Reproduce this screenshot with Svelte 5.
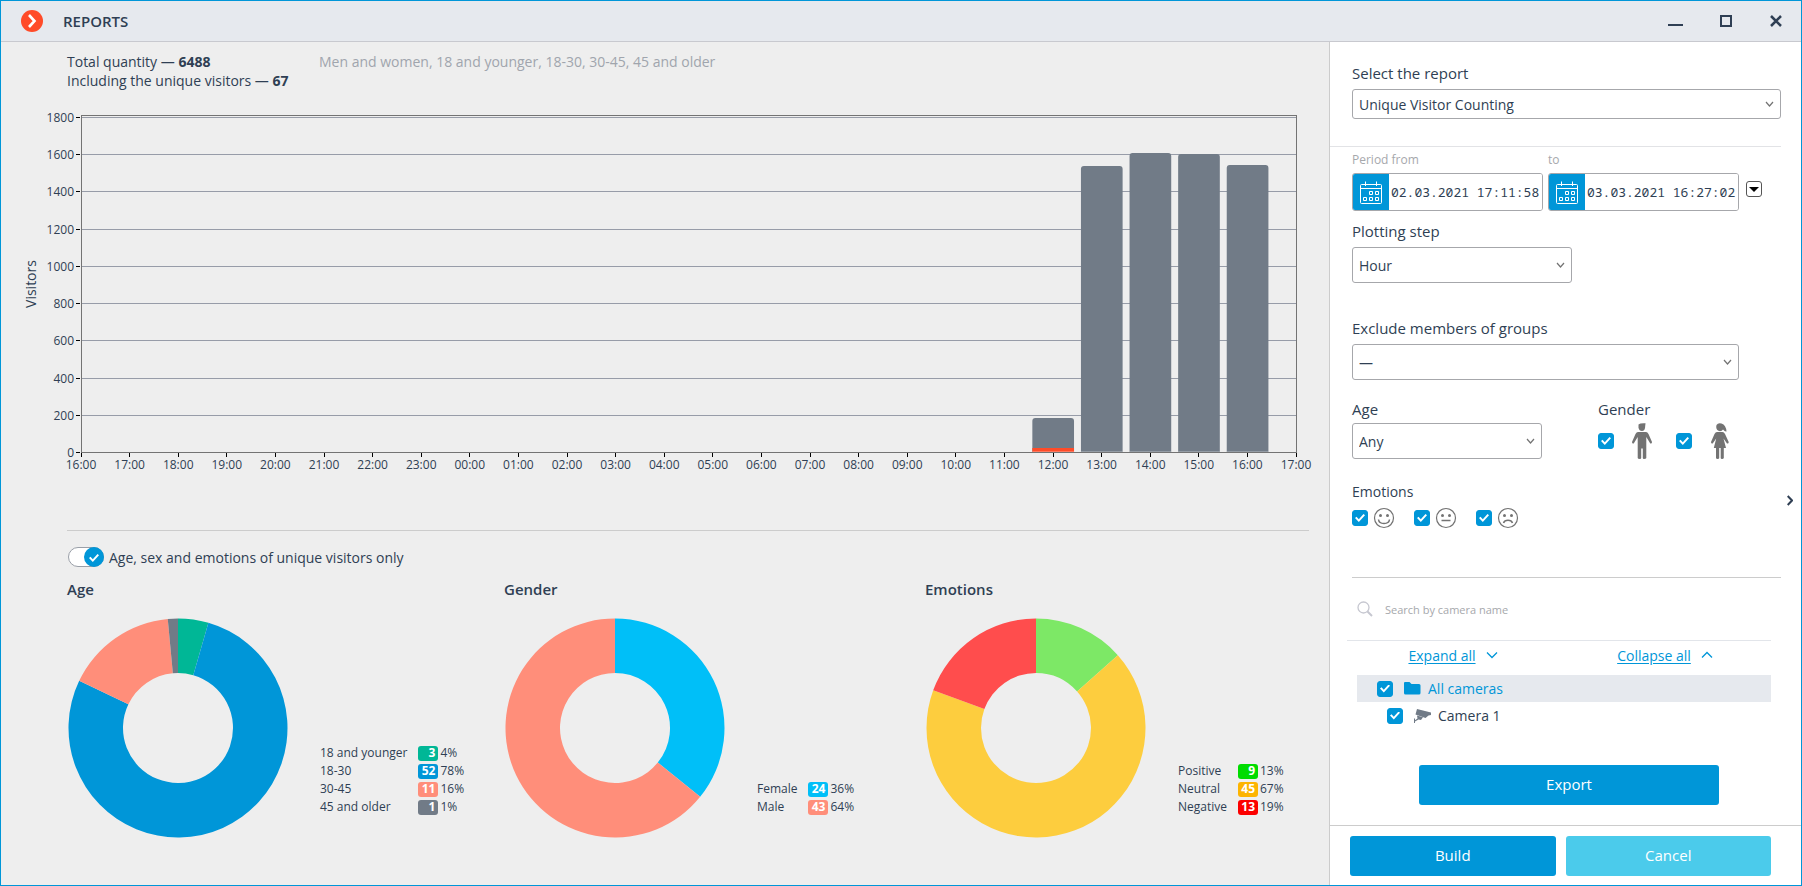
<script>
  let report = 'Unique Visitor Counting';
  let dateFrom = '02.03.2021 17:11:58';
  let dateTo = '03.03.2021 16:27:02';
  let step = 'Hour';
  let group = '—';
  let age = 'Any';
  let male = true;
  let female = true;
  let allCameras = true;
  let camera1 = true;
  let search = '';
  let uniqueOnly = true;

  const total = 6488;
  const unique = 67;

  // chart geometry, y grows down from the top of the frame
  const base = 337;
  const top = 2;
  const max = 1800;
  const yTicks = [0, 200, 400, 600, 800, 1000, 1200, 1400, 1600, 1800];
  const xTicks = Array.from({ length: 26 }, (_, i) => String((16 + i) % 24).padStart(2, '0') + ':00');

  const bars = [
    { slot: 20, value: 182, unique: 24 },
    { slot: 21, value: 1538, unique: 0 },
    { slot: 22, value: 1608, unique: 0 },
    { slot: 23, value: 1602, unique: 0 },
    { slot: 24, value: 1544, unique: 0 }
  ];

  const yOf = (value) => Math.round(base - (value / max) * (base - top));

  const charts = [
    {
      title: 'Age',
      items: [
        { label: '18 and younger', count: 3, percent: 4, color: '#00b796', badge: '#00b796' },
        { label: '18-30', count: 52, percent: 78, color: '#0096d8', badge: '#0096d8' },
        { label: '30-45', count: 11, percent: 16, color: '#ff8e7a', badge: '#ff8e7a' },
        { label: '45 and older', count: 1, percent: 1, color: '#717b87', badge: '#717b87' }
      ]
    },
    {
      title: 'Gender',
      items: [
        { label: 'Female', count: 24, percent: 36, color: '#00bff8', badge: '#00bff8' },
        { label: 'Male', count: 43, percent: 64, color: '#ff8e7a', badge: '#ff8e7a' }
      ]
    },
    {
      title: 'Emotions',
      items: [
        { label: 'Positive', count: 9, percent: 13, color: '#7de866', badge: '#00dc00' },
        { label: 'Neutral', count: 45, percent: 67, color: '#fdcd3e', badge: '#fdb400' },
        { label: 'Negative', count: 13, percent: 19, color: '#ff4d4d', badge: '#fc0000' }
      ]
    }
  ];

  let emotions = [
    { name: 'Positive', checked: true, mouth: 'M5.5 12.500 Q6 16.500 11 16.500 Q16 16.500 16.500 12.500' },
    { name: 'Neutral', checked: true, mouth: 'M6.500 13.500 H15.500' },
    { name: 'Negative', checked: true, mouth: 'M6.500 16 Q7.500 13.300 11 13.300 Q14.500 13.300 15.500 16' }
  ];

  const point = (share, r) => {
    const a = share * 2 * Math.PI;
    return `${110 + r * Math.sin(a)} ${110 - r * Math.cos(a)}`;
  };

  const slices = (items) => {
    const sum = items.reduce((s, item) => s + item.count, 0);
    let passed = 0;
    return items.map((item) => {
      const from = passed / sum;
      passed += item.count;
      const to = passed / sum;
      const large = to - from > 0.5 ? 1 : 0;
      return {
        color: item.color,
        d: `M${point(from, 109.5)} A109.5 109.5 0 ${large} 1 ${point(to, 109.5)} L${point(to, 55)} A55 55 0 ${large} 0 ${point(from, 55)} Z`
      };
    });
  };
</script>

<style>
  :global(body) {
    margin: 0;
  }

  .window {
    box-sizing: border-box;
    min-height: 100vh;
    display: flex;
    flex-direction: column;
    border: 1px solid #0096d8;
    background: #eee;
    color: #2f3f54;
    font-family: "Open Sans", "Noto Sans", sans-serif;
    font-size: 14px;
    line-height: 19px;
  }

  button, input, select {
    font: inherit;
    color: inherit;
    margin: 0;
    box-sizing: border-box;
  }

  button {
    padding: 0;
    border: none;
    background: none;
    cursor: pointer;
  }

  svg {
    display: block;
    flex: none;
  }

  /* title bar */
  .titlebar {
    display: flex;
    align-items: center;
    height: 40px;
    padding: 0 18px 0 20px;
    background: #e6e9ee;
    border-bottom: 1px solid #c8c9cf;
  }

  .titlebar h1 {
    flex: 1;
    margin: 0 0 0 20px;
    font-size: 15px;
    line-height: 18px;
    font-weight: 600;
  }

  .controls {
    display: flex;
    gap: 35px;
  }

  .body {
    flex: 1;
    display: flex;
  }

  /* report */
  .report {
    flex: 1;
    min-width: 0;
    padding: 10px 20px 0 66px;
  }

  .summary {
    display: grid;
    grid-template-columns: 252px 1fr;
  }

  .summary p {
    margin: 0;
    white-space: nowrap;
  }

  .filter {
    color: #a0a5ad;
  }

  .chart {
    margin: 25px 13px 77px 14px;
  }

  .chart svg {
    width: 100%;
    overflow: visible;
  }

  .chart .plot {
    overflow: hidden;
  }

  .chart text {
    fill: #2f3f54;
    font-size: 12px;
  }

  .chart .axis-name {
    font-size: 14px;
  }

  .chart line, .chart .frame {
    shape-rendering: crispEdges;
  }

  .grid line {
    stroke: #979ca8;
  }

  .ticks line {
    stroke: #000;
  }

  .frame {
    fill: none;
    stroke: #737373;
  }

  .details {
    border-top: 1px solid #ccc;
    padding-top: 16px;
  }

  .toggle {
    display: flex;
    align-items: center;
    gap: 5px;
    height: 20px;
    margin-left: 1px;
  }

  .toggle input {
    appearance: none;
    display: flex;
    justify-content: flex-end;
    width: 36px;
    height: 20px;
    border: 1px solid #9a9fa8;
    border-radius: 10px;
    background: #fff;
  }

  .toggle input::before {
    content: "";
    width: 18px;
    height: 18px;
    border-radius: 9px;
    background: #0096d8;
    box-shadow: 0 0 0 1px #0096d8;
  }

  .toggle input::after {
    content: "";
    position: absolute;
    width: 10px;
    height: 8px;
    margin: 6px 4px 0 0;
    background: #fff;
    clip-path: polygon(0 50%, 15% 35%, 38% 65%, 85% 0, 100% 15%, 38% 100%);
  }

  .donuts {
    display: grid;
    grid-template-columns: 437fr 421fr 384fr;
    margin-top: 11px;
  }

  h2 {
    margin: 0 0 18px;
    font-size: 15px;
    line-height: 22px;
    font-weight: 600;
  }

  .donut {
    display: flex;
    align-items: flex-end;
    gap: 32px;
    margin-left: 1px;
  }

  .legend {
    margin-bottom: 22px;
    border-spacing: 0;
    font-size: 12px;
    line-height: 18px;
    white-space: nowrap;
  }

  .legend th {
    padding: 0 11px 0 0;
    font-weight: 400;
    text-align: left;
  }

  .legend td {
    padding: 0 2px 0 0;
  }

  .badge {
    display: block;
    box-sizing: border-box;
    width: 20px;
    height: 15px;
    padding-right: 3px;
    border-radius: 3px;
    color: #fff;
    font-weight: 700;
    line-height: 14px;
    text-align: right;
  }

  /* side panel */
  .side {
    box-sizing: border-box;
    flex: 0 0 472px;
    display: flex;
    flex-direction: column;
    background: #fff;
    border-left: 1px solid #ccc;
  }

  .side-body {
    flex: 1;
    display: flex;
    align-items: flex-start;
  }

  .options {
    flex: 1;
    padding: 21px 0 20px;
  }

  .handle {
    flex: 0 0 20px;
    padding: 0 6px;
    box-sizing: border-box;
    margin-top: 453px;
  }

  .block {
    padding-left: 22px;
  }

  .caption {
    display: block;
    margin-bottom: 6px;
    font-size: 15px;
    line-height: 20px;
  }

  .select {
    position: relative;
    display: block;
    height: 36px;
  }

  .select select {
    appearance: none;
    width: 100%;
    height: 100%;
    padding: 0 28px 0 6px;
    border: 1px solid #a6a7ab;
    border-radius: 3px;
    background: #fff;
  }

  .select svg {
    position: absolute;
    right: 7px;
    top: 50%;
    margin-top: -3px;
    pointer-events: none;
  }

  .select.small {
    height: 30px;
    margin-bottom: 27px;
  }

  .select.step {
    width: 220px;
    margin-bottom: 35px;
  }

  .select.groups {
    width: 387px;
    margin-bottom: 19px;
  }

  .select.age {
    width: 190px;
  }

  .period {
    display: flex;
    align-items: flex-end;
    gap: 5px;
    padding-top: 5px;
    margin-bottom: 10px;
    border-top: 1px solid #e2e3e6;
  }

  .period label {
    display: block;
    margin-bottom: 5px;
    color: #a6a8ac;
    font-size: 12px;
    line-height: 16px;
  }

  .date {
    box-sizing: border-box;
    display: flex;
    width: 191px;
    height: 38px;
    border: 1px solid #a6a7ab;
    border-radius: 3px;
    overflow: hidden;
  }

  .date button {
    flex: 0 0 36px;
    display: grid;
    place-items: center;
    background: #0096d8;
  }

  .date input {
    flex: 1;
    min-width: 0;
    padding: 0 0 0 2px;
    border: none;
    font-family: "Droid Sans Mono", "Noto Sans Mono", "Liberation Mono", monospace;
    font-size: 13px;
  }

  .presets {
    display: grid;
    place-items: center;
    width: 16px;
    height: 16px;
    margin: 0 0 14px 2px;
    border: 1px solid #555;
    border-radius: 3px;
  }

  .people {
    display: flex;
    gap: 56px;
  }

  .people .caption {
    margin-bottom: 4px;
  }

  .checks {
    display: flex;
    align-items: center;
  }

  .genders {
    gap: 24px;
  }

  .genders label {
    display: flex;
    align-items: center;
    gap: 18px;
    width: 54px;
  }

  .check {
    appearance: none;
    flex: none;
    display: grid;
    place-items: center;
    width: 16px;
    height: 16px;
    border-radius: 3px;
    background: #fff;
    border: 1px solid #0096d8;
  }

  .check:checked {
    background: #0096d8;
  }

  .check::after {
    content: "";
    width: 10px;
    height: 8px;
    background: #fff;
    clip-path: polygon(0 50%, 15% 35%, 38% 65%, 85% 0, 100% 15%, 38% 100%);
  }

  .moods {
    margin: 23px 0 48px;
  }

  .moods .caption {
    margin-bottom: 5px;
    font-size: 14px;
  }

  .moods .checks {
    gap: 26px;
  }

  .moods label {
    display: flex;
    align-items: center;
    gap: 5px;
    width: 36px;
  }

  .search {
    display: flex;
    align-items: center;
    gap: 12px;
    height: 62px;
    margin-left: 22px;
    padding-left: 5px;
    border-top: 1px solid #ccc;
  }

  .search input {
    flex: 1;
    padding: 0;
    border: none;
    outline: none;
    font-size: 11px;
  }

  .search input::placeholder {
    color: #a6a8ac;
    opacity: 1;
  }

  .tree {
    margin: 0 10px 36px 17px;
    border-top: 1px solid #e2e5ea;
  }

  .links {
    display: grid;
    grid-template-columns: 1fr 1fr;
    height: 28px;
    margin-bottom: 6px;
  }

  .links a {
    display: flex;
    align-items: center;
    justify-content: center;
    gap: 10px;
    color: #0096d8;
    text-underline-offset: 2px;
  }

  .node {
    display: flex;
    align-items: center;
    height: 27px;
    margin-left: 10px;
    padding-left: 20px;
  }

  .node.child {
    padding-left: 30px;
  }

  .node svg {
    margin: 0 7px 0 11px;
  }

  .node.selected {
    background: #e6e9ee;
    color: #0096d8;
  }

  .btn {
    height: 40px;
    padding-bottom: 2px;
    border-radius: 3px;
    background: #0096d8;
    color: #fff;
    font-size: 15px;
  }

  .btn.export {
    display: block;
    width: 300px;
    margin: 0 auto;
  }

  .export-row {
    padding-left: 27px;
  }

  .btn.cancel {
    background: #4bcbeb;
  }

  .footer {
    display: grid;
    grid-template-columns: 1fr 1fr;
    gap: 10px;
    padding: 10px 30px 9px 20px;
    border-top: 1px solid #ccc;
  }
</style>

{#snippet chevron()}
  <svg width="9" height="7" viewBox="0 0 9 7" fill="none" stroke="#737373" stroke-width="1.200">
    <path d="M1 1 L4.500 5 L8 1" />
  </svg>
{/snippet}

{#snippet calendar()}
  <svg width="22" height="23" viewBox="0 0 22 23" fill="none" stroke="#fff">
    <rect x="0.500" y="3.500" width="21" height="19" rx="1" />
    <path d="M0.500 7.500 H21.500 M5.500 0.500 V5 M16.500 0.500 V5" />
    <path d="M9.500 10.500 h3 v3 h-3z M15.500 10.500 h3 v3 h-3z M3.500 16.500 h3 v3 h-3z M9.500 16.500 h3 v3 h-3z M15.500 16.500 h3 v3 h-3z" />
  </svg>
{/snippet}

<div class="window">
  <header class="titlebar">
    <svg width="22" height="22" viewBox="0 0 22 22">
      <circle cx="11" cy="11" r="11" fill="#ff4b28" />
      <path d="M8 5 L13.500 11 L8 17" fill="none" stroke="#fff" stroke-width="2.600" />
    </svg>
    <h1>REPORTS</h1>
    <div class="controls">
      <button aria-label="Minimize">
        <svg width="15" height="16" viewBox="0 0 15 16"><rect y="11" width="15" height="2" fill="#2f3f54" /></svg>
      </button>
      <button aria-label="Maximize">
        <svg width="16" height="16" viewBox="0 0 16 16"><rect x="3" y="3" width="10" height="10" fill="none" stroke="#2f3f54" stroke-width="2" /></svg>
      </button>
      <button aria-label="Close">
        <svg width="14" height="16" viewBox="0 0 14 16"><path d="M2 3 L12 13 M12 3 L2 13" stroke="#2f3f54" stroke-width="2.500" /></svg>
      </button>
    </div>
  </header>

  <div class="body">
    <main class="report">
      <div class="summary">
        <div>
          <p>Total quantity — <b>{total}</b></p>
          <p>Including the unique visitors — <b>{unique}</b></p>
        </div>
        <p class="filter">Men and women, 18 and younger, 18-30, 30-45, 45 and older</p>
      </div>

      <div class="chart">
        <svg height="338">
          <g class="grid">
            {#each yTicks as tick}
              <line x1="0" x2="100%" y1={yOf(tick) + 0.5} y2={yOf(tick) + 0.5} />
            {/each}
          </g>
          <svg class="plot" width="100%" height="337">
            {#each bars as bar}
              <rect x="{bar.slot * 4 - 1.7}%" y={yOf(bar.value)} width="3.43%" height="345" rx="3" fill="#717b87" />
              {#if bar.unique}
                <rect x="{bar.slot * 4 - 1.7}%" y={yOf(bar.unique)} width="3.43%" height="10" fill="#ff4b28" />
              {/if}
              <rect x="{bar.slot * 4 - 1.7}%" y="336" width="3.43%" height="1" fill="#fff" opacity="0.25" />
            {/each}
          </svg>
          <rect class="frame" x="0.500" y="0.500" width="100%" height="337" />
          <g class="ticks">
            {#each yTicks as tick}
              <line x1="-5" x2="-1" y1={yOf(tick) + 0.5} y2={yOf(tick) + 0.5} />
              <text x="-7" y={yOf(tick) + 5} text-anchor="end">{tick}</text>
            {/each}
            {#each xTicks as label, i}
              <line x1="{i * 4}%" x2="{i * 4}%" y1="338" y2="342" />
              <text x="{i * 4}%" y="354" text-anchor="middle">{label}</text>
            {/each}
          </g>
          <text class="axis-name" transform="translate(-45 169) rotate(-90)" text-anchor="middle">Visitors</text>
        </svg>
      </div>

      <section class="details">
        <label class="toggle">
          <input type="checkbox" role="switch" bind:checked={uniqueOnly} />
          Age, sex and emotions of unique visitors only
        </label>

        <div class="donuts">
          {#each charts as chart}
            <section>
              <h2>{chart.title}</h2>
              <div class="donut">
                <svg width="220" height="220" viewBox="0 0 220 220">
                  {#each slices(chart.items) as slice}
                    <path d={slice.d} fill={slice.color} />
                  {/each}
                </svg>
                <table class="legend">
                  <tbody>
                    {#each chart.items as item}
                      <tr>
                        <th scope="row">{item.label}</th>
                        <td><span class="badge" style="background: {item.badge}">{item.count}</span></td>
                        <td>{item.percent}%</td>
                      </tr>
                    {/each}
                  </tbody>
                </table>
              </div>
            </section>
          {/each}
        </div>
      </section>
    </main>

    <aside class="side">
      <div class="side-body">
        <div class="options">
          <div class="block">
            <label class="caption" for="report">Select the report</label>
            <div class="select small">
              <select id="report" bind:value={report}>
                <option>Unique Visitor Counting</option>
              </select>
              {@render chevron()}
            </div>
          </div>

          <div class="block period">
            <div>
              <label for="from">Period from</label>
              <div class="date">
                <button aria-label="Choose start date">{@render calendar()}</button>
                <input id="from" type="text" bind:value={dateFrom} />
              </div>
            </div>
            <div>
              <label for="to">to</label>
              <div class="date">
                <button aria-label="Choose end date">{@render calendar()}</button>
                <input id="to" type="text" bind:value={dateTo} />
              </div>
            </div>
            <button class="presets" aria-label="Period presets">
              <svg width="10" height="5" viewBox="0 0 10 5"><path d="M0 0 H10 L5 5z" /></svg>
            </button>
          </div>

          <div class="block">
            <label class="caption" for="step">Plotting step</label>
            <div class="select step">
              <select id="step" bind:value={step}>
                <option>Hour</option>
              </select>
              {@render chevron()}
            </div>

            <label class="caption" for="groups">Exclude members of groups</label>
            <div class="select groups">
              <select id="groups" bind:value={group}>
                <option>—</option>
              </select>
              {@render chevron()}
            </div>

            <div class="people">
              <div>
                <label class="caption" for="age">Age</label>
                <div class="select age">
                  <select id="age" bind:value={age}>
                    <option>Any</option>
                  </select>
                  {@render chevron()}
                </div>
              </div>
              <div>
                <span class="caption">Gender</span>
                <div class="checks genders">
                  <label>
                    <input class="check" type="checkbox" aria-label="Male" bind:checked={male} />
                    <svg width="20" height="36" viewBox="0 0 20 36" fill="#737373">
                      <path d="M6.500 1.500 Q8 0 13.500 0.300 L13 5 Q12.500 8 10 8 Q7 8 6.500 4.500z" />
                      <path d="M6 9 H14 Q15.500 9 16.500 11 L20 19 Q20 21 18.300 20.500 L14.300 14 V35 Q14 36 12 36 Q10.800 36 10.800 35 V25.500 H9.200 V35 Q9 36 8 36 Q5.700 36 5.700 35 V14 L1.700 20.500 Q0 21 0 19 L3.500 11 Q4.500 9 6 9z" />
                    </svg>
                  </label>
                  <label>
                    <input class="check" type="checkbox" aria-label="Female" bind:checked={female} />
                    <svg width="20" height="36" viewBox="0 0 20 36" fill="#737373">
                      <path d="M6.500 2 Q8 -0.500 11.500 0.500 Q16 2 16.500 8.500 Q15 9 13 6.500 Q12 8.200 10 8.200 Q6.500 8 6.200 4z" />
                      <path d="M7 9 H12.500 Q14 9 15 11 L18.700 19 Q18.700 21 17 20.500 L13.500 15.500 L16 25 H13.800 V35 Q13.500 36 12 36 Q10.700 36 10.700 35 V25 H9.200 V35 Q9 36 7.800 36 Q6 36 6 35 V25 H3.800 L6.200 15.500 L2.700 20.500 Q1 21 1 19 L4.500 11 Q5.500 9 7 9z" />
                    </svg>
                  </label>
                </div>
              </div>
            </div>

            <div class="moods">
              <span class="caption">Emotions</span>
              <div class="checks">
                {#each emotions as emotion}
                  <label>
                    <input class="check" type="checkbox" aria-label={emotion.name} bind:checked={emotion.checked} />
                    <svg width="22" height="22" viewBox="0 0 22 22" fill="none" stroke="#737373">
                      <circle cx="11" cy="11" r="9.500" stroke-width="1.200" />
                      <circle cx="7.500" cy="8.500" r="1.500" fill="#737373" stroke="none" />
                      <circle cx="14.500" cy="8.500" r="1.500" fill="#737373" stroke="none" />
                      <path d={emotion.mouth} stroke-width="1.500" />
                    </svg>
                  </label>
                {/each}
              </div>
            </div>
          </div>

          <div class="search">
            <svg width="16" height="16" viewBox="0 0 16 16" fill="none" stroke="#c6c7d0">
              <circle cx="6.500" cy="6.500" r="5.500" stroke-width="1.300" />
              <path d="M10.500 10.500 L15 15" stroke-width="2" />
            </svg>
            <input type="text" aria-label="Search by camera name" placeholder="Search by camera name" bind:value={search} />
          </div>

          <div class="tree">
            <div class="links">
              <a href="#expand">
                Expand all
                <svg width="12" height="8" viewBox="0 0 12 8" fill="none" stroke="#0096d8" stroke-width="1.300"><path d="M1 1.500 L6 6.500 L11 1.500" /></svg>
              </a>
              <a href="#collapse">
                Collapse all
                <svg width="12" height="8" viewBox="0 0 12 8" fill="none" stroke="#0096d8" stroke-width="1.300"><path d="M1 6.500 L6 1.500 L11 6.500" /></svg>
              </a>
            </div>
            <label class="node selected">
              <input class="check" type="checkbox" bind:checked={allCameras} />
              <svg width="17" height="13" viewBox="0 0 17 13"><path d="M0 1 Q0 0 1 0 H5.500 L7.500 2 H15 Q16.500 2 16.500 3.500 V11 Q16.500 12.500 15 12.500 H1.500 Q0 12.500 0 11z" fill="#0096d8" /></svg>
              All cameras
            </label>
            <label class="node child">
              <input class="check" type="checkbox" bind:checked={camera1} />
              <svg width="17" height="14" viewBox="0 0 17 14" fill="#717b87">
                <path d="M3 0 L17 3.500 V6 L14.500 6.500 L11.500 9 L1.500 5.500z" />
                <path d="M3 6.500 L9 8.300 L7 11 L4.500 10.500 L1 12.500 V14 H0 V9.500 H1 V11.300 L3.500 9.500z" />
              </svg>
              Camera 1
            </label>
          </div>

          <div class="export-row">
            <button class="btn export">Export</button>
          </div>
        </div>

        <button class="handle" aria-label="Hide panel">
          <svg width="6" height="11" viewBox="0 0 6 11" fill="none" stroke="#2f3f54" stroke-width="2"><path d="M0.700 1 L5 5.500 L0.700 10" /></svg>
        </button>
      </div>

      <footer class="footer">
        <button class="btn">Build</button>
        <button class="btn cancel">Cancel</button>
      </footer>
    </aside>
  </div>
</div>
